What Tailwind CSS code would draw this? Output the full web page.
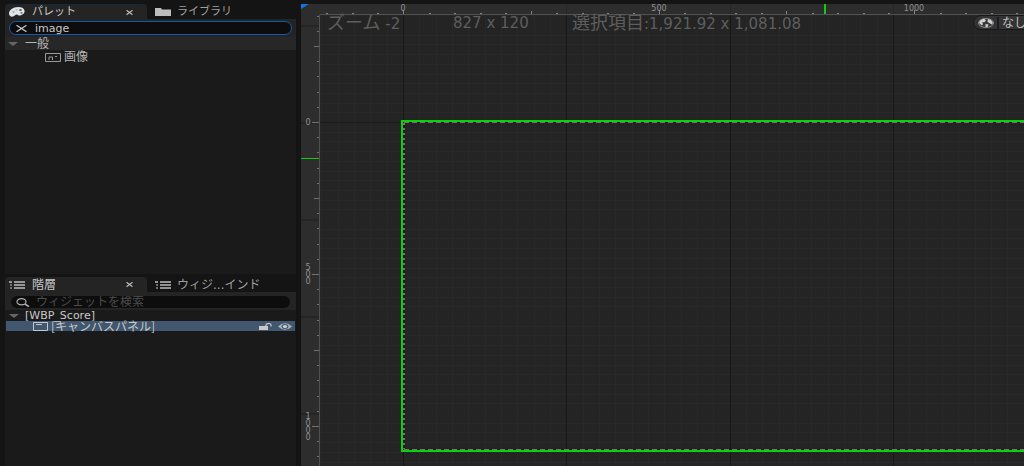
<!DOCTYPE html>
<html lang="ja">
<head>
  <meta charset="UTF-8">
  <meta name="viewport" content="width=device-width, initial-scale=1.0">
  <title>WBP_Score</title>
  <script src="https://cdn.jsdelivr.net/npm/@tailwindcss/browser@4"></script>
</head>
<body class="h-screen overflow-hidden bg-[#141414] pt-1 flex font-['DejaVu_Sans','Noto_Sans_CJK_JP',sans-serif] text-[#b4b4b4]">

  <!-- Side panels -->
  <aside class="w-[301px] shrink-0 pl-[5px] pr-[5px] flex flex-col gap-[3px]">

    <!-- Palette -->
    <section class="grow-[270] basis-0 min-h-0 flex flex-col bg-[#1a1a1a]">
      <div class="flex h-[15px] shrink-0 bg-[#141414] text-[11px] leading-3">
        <div class="w-[142px] flex items-center pl-1 pr-3.5 bg-[#242424] rounded-t border-t border-[#14283d]">
          <svg class="w-4 h-2.5 shrink-0" viewBox="0 0 16 10">
            <path fill="#e4e4e4" d="M9 0C4 0 0 3 0 6.500C0 9 2 10 4 9.500C6 9 6 7.500 8 7.500C9 7.500 9 9 11 8.500C14 8 16 6 15.500 3.500C15 1 12.500 0 9 0z"/>
            <ellipse cx="4.500" cy="5" rx="1.300" ry=".8" fill="#8a9aaa"/>
            <ellipse cx="7.500" cy="2.800" rx="1.300" ry=".8" fill="#9fbcd8"/>
            <ellipse cx="11.500" cy="3" rx="1.300" ry=".8" fill="#242424"/>
            <ellipse cx="12.500" cy="5.800" rx="1.200" ry=".9" fill="#4d7fae"/>
          </svg>
          <span class="ml-[7px] text-[#c8c8c8]">パレット</span>
          <button type="button" aria-label="パレットを閉じる" class="ml-auto">
            <svg class="w-[7px] h-[5px]" viewBox="0 0 7 5"><path d="M.5 .3L6.500 4.700M6.500 .3L.5 4.700" stroke="#c0c0c0" stroke-width="1.200"/></svg>
          </button>
        </div>
        <div class="flex items-center pl-2">
          <svg class="w-4 h-2" viewBox="0 0 16 8"><path fill="#bdbdbd" d="M0 0h6l1 1.500h9V8H0z"/></svg>
          <span class="ml-1.5 text-[#a0a0a0]">ライブラリ</span>
        </div>
      </div>
      <div class="bg-[#242424] py-[2px] px-1">
        <label class="flex items-center h-[14px] rounded-full border border-[#1559a8] bg-[#0d0d0d] pl-1.5">
          <svg class="w-[11px] h-[7px] shrink-0" viewBox="0 0 11 7"><path d="M.5 .3L10.500 6.700M10.500 .3L.5 6.700" stroke="#c8c8c8" stroke-width="1.300"/></svg>
          <input type="text" value="image" aria-label="パレットを検索" class="ml-2 w-full bg-transparent outline-none text-[11px] leading-3 h-[14px] text-[#c8c8c8]">
        </label>
      </div>
      <div class="flex items-center h-[13px] bg-[#272727] pl-[3px] text-[12px] leading-3">
        <svg class="w-2.5 h-1" viewBox="0 0 10 4"><path d="M0 0h10L5 4z" fill="#666"/></svg>
        <span class="ml-[7px]">一般</span>
      </div>
      <div class="flex items-center h-[14px] pl-10 text-[12px] leading-3">
        <svg class="w-4 h-[9px]" viewBox="0 0 16 9">
          <path d="M.5 .5h15v8H.5z" fill="none" stroke="#9a9a9a"/>
          <path d="M4 7V4h3.500v3M10 3.500h2" fill="none" stroke="#9a9a9a"/>
        </svg>
        <span class="ml-[3px]">画像</span>
      </div>
    </section>

    <!-- Hierarchy -->
    <section class="grow-[189] basis-0 min-h-0 flex flex-col bg-[#1a1a1a]">
      <div class="flex h-[15px] shrink-0 bg-[#141414] text-[12px] leading-3">
        <div class="w-[142px] flex items-center pl-1 pr-3.5 bg-[#242424] rounded-t">
          <svg class="w-4 h-2 shrink-0" viewBox="0 0 16 8">
            <path d="M0 1h3M5 1h11M5 4h11M5 7h11" stroke="#bdbdbd" stroke-width="1.300"/><path d="M1 4h2M1 7h2" stroke="#8a8a8a" stroke-width="1.300"/>
          </svg>
          <span class="ml-[7px] text-[#c8c8c8]">階層</span>
          <button type="button" aria-label="階層を閉じる" class="ml-auto">
            <svg class="w-[7px] h-[5px]" viewBox="0 0 7 5"><path d="M.5 .3L6.500 4.700M6.500 .3L.5 4.700" stroke="#c0c0c0" stroke-width="1.200"/></svg>
          </button>
        </div>
        <div class="flex items-center pl-2">
          <svg class="w-4 h-2" viewBox="0 0 16 8">
            <path d="M0 1h3M5 1h11M5 4h11M5 7h11" stroke="#bdbdbd" stroke-width="1.300"/><path d="M1 4h2M1 7h2" stroke="#8a8a8a" stroke-width="1.300"/>
          </svg>
          <span class="ml-1.5 text-[#a0a0a0]">ウィジ...インド</span>
        </div>
      </div>
      <div class="bg-[#242424] pt-1 pb-[2px] px-1.5">
        <label class="flex items-center h-3 rounded-full bg-[#0d0d0d] pl-[5px]">
          <svg class="w-[14px] h-[9px] shrink-0" viewBox="0 0 14 9"><ellipse cx="5.500" cy="3.800" rx="4.500" ry="3.100" fill="none" stroke="#b0b0b0" stroke-width="1.200"/><path d="M8.800 6L13 8.700" stroke="#b0b0b0" stroke-width="1.500"/></svg>
          <input type="text" placeholder="ウィジェットを検索" aria-label="ウィジェットを検索" class="ml-1.5 w-full bg-transparent outline-none text-[12px] leading-3 h-3 placeholder:text-[#4c4c4c]">
        </label>
      </div>
      <ul class="px-[1px] text-[#c8c8c8]">
        <li class="flex items-center h-[11px] pl-[3px] text-[11px] leading-[10px]">
          <svg class="w-2.5 h-1" viewBox="0 0 10 4"><path d="M0 0h10L5 4z" fill="#666"/></svg>
          <span class="ml-1.5">[WBP_Score]</span>
        </li>
        <li class="flex items-center h-2.5 pl-[27px] pr-[3px] bg-[#40576f] text-[12px] leading-[10px]">
          <svg class="w-[15px] h-[9px]" viewBox="0 0 15 9"><path d="M.5 .5h14v8H.5zM3 2.500h6" fill="none" stroke="#c0c8d0"/></svg>
          <span class="ml-[3px] font-['Noto_Sans_CJK_JP',sans-serif]">[キャンバスパネル]</span>
          <button type="button" aria-label="ロック" class="ml-auto">
            <svg class="w-[13px] h-[7px]" viewBox="0 0 13 7"><path d="M0 3h9v4H0z" fill="#c8c8c8"/><path d="M7 3.500V2C7 0 12 0 12 2v1.500" fill="none" stroke="#c8c8c8" stroke-width="1.200"/></svg>
          </button>
          <button type="button" aria-label="表示" class="ml-1.5">
            <svg class="w-[14px] h-[7px]" viewBox="0 0 14 7"><path d="M0 3.500Q7 -3 14 3.500Q7 10 0 3.500z" fill="#a9b4bf"/><ellipse cx="7" cy="3.500" rx="3.400" ry="2.500" fill="#40576f"/><ellipse cx="7" cy="3.500" rx="2.100" ry="1.500" fill="#d0d0d0"/></svg>
          </button>
        </li>
      </ul>
    </section>
  </aside>

  <!-- Designer -->
  <main class="grow min-w-0 grid grid-cols-[19px_minmax(0,1fr)] grid-rows-[11px_minmax(0,1fr)]">
    <div class="bg-[#2d2d2d]">
      <svg class="w-2 h-[5px]" viewBox="0 0 8 5"><path d="M0 0h8L0 5z" fill="#1473e6"/></svg>
    </div>
    <div class="bg-[#2d2d2d] border-b border-[#505050]">
      <svg id="rulerX" class="block w-full h-[10px]"></svg>
    </div>
    <div class="bg-[#2d2d2d] border-r border-[#505050]">
      <svg id="rulerY" class="block w-full h-full"></svg>
    </div>
    <div class="relative bg-[#242424]">
      <svg id="grid" class="absolute inset-0 w-full h-full"></svg>
      <div class="relative flex justify-between text-[15px] leading-4 text-[#5e5e5e]">
        <div class="flex pl-[7px] whitespace-nowrap">
          <span class="w-[126px]"><span class="text-[18px]">ズーム</span> -2</span>
          <span class="w-[119px]">827 x 120</span>
          <span><span class="text-[18px]">選択項目</span>:1,921.92 x 1,081.08</span>
        </div>
        <button type="button" class="flex items-center h-[13px] mt-[1px] w-[50px] rounded-l-full bg-[#333] outline outline-[#181818] text-[12px] leading-3 text-[#c0c0c0] whitespace-nowrap">
          <svg class="w-4 h-2.5 ml-1 shrink-0" viewBox="0 0 16 10">
            <ellipse cx="8" cy="5" rx="7.500" ry="4.500" fill="#3a3a3a" stroke="#8c8c8c"/>
            <path d="M2 2.500L6 .5L8 2.500L6.500 4L4 4.500L5 6L4 7.500L1 5zM10 1l3 1l2 3l-1.500 1.500l-2 -1.500l-2 -1zM7.500 6l3 .5l-1 2.500l-2 0z" fill="#d0d0d0"/>
          </svg>
          <span class="ml-[3px] border-l-2 border-[#1c1c1c] pl-[3px]">なし</span>
        </button>
      </div>
    </div>
  </main>

  <script>
    const NS = 'http://www.w3.org/2000/svg';
    const zero = { x: 83, y: 107 };      // canvas origin inside the viewport
    const tick = { x: 25.55, y: 15.2 };  // 50 units on each ruler
    const cell = { x: 16.33, y: 9.7 };   // grid cell

    const rulerX = document.getElementById('rulerX');
    const rulerY = document.getElementById('rulerY');
    const grid = document.getElementById('grid');

    function add(parent, name, attrs, text) {
      const el = document.createElementNS(NS, name);
      for (const key in attrs) el.setAttribute(key, attrs[key]);
      if (text) el.textContent = text;
      parent.appendChild(el);
    }

    function box(parent, x, y, width, height, fill) {
      add(parent, 'rect', { x, y, width, height, fill });
    }

    function label(parent, x, y, text) {
      add(parent, 'text', { x, y, fill: '#909090', 'font-size': 8, 'text-anchor': 'middle' }, text);
    }

    function draw() {
      [rulerX, rulerY, grid].forEach(el => el.replaceChildren());

      // Viewport without the side panels and rulers
      const w = window.innerWidth - 320;
      const h = window.innerHeight - 15;

      // Grid, minor lines first
      for (let i = -5; zero.x + i * cell.x < w; i++) {
        if (i % 10) box(grid, Math.round(zero.x + i * cell.x), 0, 1, h, '#282828');
      }
      for (let i = -11; zero.y + i * cell.y < h; i++) {
        if (i % 10) box(grid, 0, Math.round(zero.y + i * cell.y), w, 1, '#282828');
      }
      for (let x = zero.x; x < w; x += cell.x * 10) {
        box(grid, Math.round(x), 0, 1, h, '#181818');
        if (x > zero.x) box(rulerX, Math.round(x), 0, 1, 10, '#262626');
      }
      box(grid, 0, zero.y, w, 1, '#1b1b1b');
      for (let y = zero.y - cell.y * 10; y < h; y += cell.y * 10) {
        box(rulerY, 0, Math.round(y), 18, 2, '#252525');
      }

      // Rulers
      for (let i = -3; zero.x + i * tick.x < w; i++) {
        const len = i % 10 === 0 ? 4 : i % 5 === 0 ? 3 : 1;
        const x = Math.round(zero.x + i * tick.x);
        box(rulerX, x, 10 - len, i % 5 ? 2 : 1, len, '#858585');
        if (i % 10 === 0) label(rulerX, x, 7, String(i * 50));
      }
      for (let i = -7; zero.y + i * tick.y < h; i++) {
        const len = i % 10 === 0 ? 7 : i % 5 === 0 ? 5 : 2;
        const y = Math.round(zero.y + i * tick.y);
        box(rulerY, 18 - len, y, len, 1, '#707070');
        if (i % 10 === 0) {
          const digits = String(i * 50).split('');
          digits.forEach((d, n) => label(rulerY, 7, y + 3 + Math.round((n - (digits.length - 1) / 2) * 7), d));
        }
      }

      // Cursor position
      box(rulerX, 504, 0, 2, 10, '#14c814');
      box(rulerY, 0, 143, 18, 1, '#14c814');

      // Selected canvas panel
      add(grid, 'rect', { x: 84, y: 107, width: 1200, height: 328, fill: 'none', stroke: '#1a1a1a', 'stroke-width': 2 });
      add(grid, 'path', { d: 'M84 107.5H1284M84 434.5H1284', stroke: '#747474', 'stroke-dasharray': '5 3' });
      add(grid, 'path', { d: 'M84 108V434', stroke: '#747474', 'stroke-width': 2, 'stroke-dasharray': '2 3' });
      add(grid, 'rect', { x: 82, y: 106, width: 1204, height: 330, fill: 'none', stroke: '#0ad20a', 'stroke-width': 2 });
    }

    draw();
    window.addEventListener('resize', draw);
  </script>

</body>
</html>
